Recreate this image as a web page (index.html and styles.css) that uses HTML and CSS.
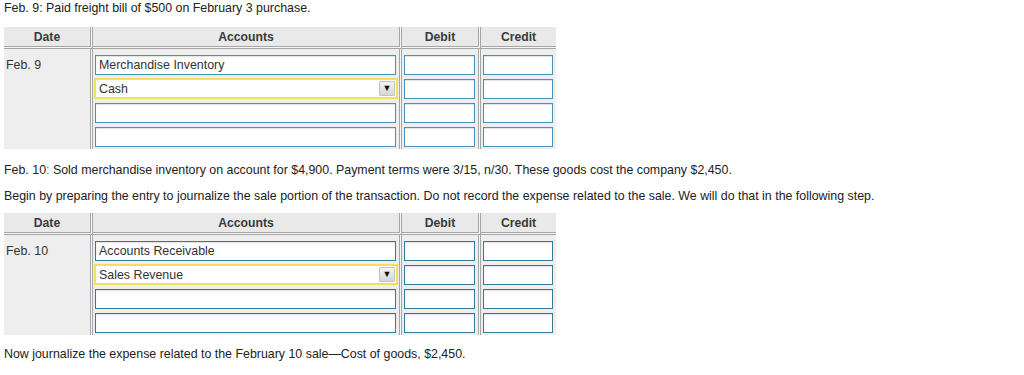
FILE: index.html
```html
<!DOCTYPE html>
<html>
<head>
<meta charset="utf-8">
<link rel="stylesheet" href="styles.css">
</head>
<body>
<p class="line first">Feb. 9: Paid freight bill of $500 on February 3 purchase.</p>
<table class="journal t1">
  <colgroup><col class="c-date"><col class="c-acct"><col class="c-deb"><col class="c-cred"></colgroup>
  <thead>
    <tr><th>Date</th><th>Accounts</th><th>Debit</th><th class="last">Credit</th></tr>
  </thead>
  <tbody>
    <tr class="r1">
      <td class="date" rowspan="4"><div class="datetext">Feb. 9</div></td>
      <td><div class="field">Merchandise Inventory</div></td>
      <td><div class="field"></div></td>
      <td class="last"><div class="field"></div></td>
    </tr>
    <tr>
      <td><div class="select"><span>Cash</span><span class="arrow">&#9660;</span></div></td>
      <td><div class="field"></div></td>
      <td class="last"><div class="field"></div></td>
    </tr>
    <tr>
      <td><div class="field"></div></td>
      <td><div class="field"></div></td>
      <td class="last"><div class="field"></div></td>
    </tr>
    <tr>
      <td><div class="field"></div></td>
      <td><div class="field"></div></td>
      <td class="last"><div class="field"></div></td>
    </tr>
  </tbody>
</table>
<p class="line after-table">Feb. 10<span class="green">:</span> Sold merchandise inventory on account for $4,900. Payment terms were 3/15, n/30. These goods cost the company $2,450.</p>
<p class="line gap">Begin by preparing the entry to journalize the sale portion of the transaction. Do not record the expense related to the sale. We will do that in the following step.</p>
<table class="journal t2">
  <colgroup><col class="c-date"><col class="c-acct"><col class="c-deb"><col class="c-cred"></colgroup>
  <thead>
    <tr><th>Date</th><th>Accounts</th><th>Debit</th><th class="last">Credit</th></tr>
  </thead>
  <tbody>
    <tr class="r1">
      <td class="date" rowspan="4"><div class="datetext">Feb. 10</div></td>
      <td><div class="field dark">Accounts Receivable</div></td>
      <td><div class="field dark"></div></td>
      <td class="last"><div class="field dark"></div></td>
    </tr>
    <tr>
      <td><div class="select"><span>Sales Revenue</span><span class="arrow">&#9660;</span></div></td>
      <td><div class="field dark"></div></td>
      <td class="last"><div class="field dark"></div></td>
    </tr>
    <tr>
      <td><div class="field dark"></div></td>
      <td><div class="field dark"></div></td>
      <td class="last"><div class="field dark"></div></td>
    </tr>
    <tr>
      <td><div class="field dark"></div></td>
      <td><div class="field dark"></div></td>
      <td class="last"><div class="field dark"></div></td>
    </tr>
  </tbody>
</table>
<p class="line last-line">Now journalize the expense related to the February 10 sale&mdash;Cost of goods, $2,450.</p>
</body>
</html>
```

FILE: styles.css
```css
html, body {
  margin: 0;
  background: #ffffff;
}
body {
  padding: 1px 4px 0 4px;
  font-family: "Liberation Sans", Arial, sans-serif;
  font-size: 12.4px;
  color: #222;
}
.line {
  margin: 0;
  line-height: 14px;
  white-space: nowrap;
}
.line.gap {
  margin-top: 12px;
}
.line.after-table {
  margin-top: 14px;
}
.line.last-line {
  margin-top: 12px;
}
.green { color: #3a9a3a; }

.journal {
  border-collapse: separate;
  border-spacing: 0;
  table-layout: fixed;
  width: 552px;
  background: #f7f7f7;
}
.journal.t1 { margin-top: 12px; }
.journal.t2 { margin-top: 10px; }
.c-date { width: 89px; }
.c-acct { width: 309px; }
.c-deb { width: 79px; }
.c-cred { width: 75px; }

.journal th {
  height: 19px;
  padding: 0;
  background: #e9e9e9;
  background-clip: padding-box;
  border-right: 3px double #a6a6a6;
  border-bottom: 3px double #a6a6a6;
  font-weight: bold;
  color: #3a3a3a;
  text-align: center;
  vertical-align: middle;
  font-size: 12.2px;
  line-height: 14px;
}
.journal td {
  padding: 2px 3px 2px 2px;
  background: #eeeeee;
  background-clip: padding-box;
  border-right: 3px double #a6a6a6;
  vertical-align: top;
}
.journal th.last, .journal td.last {
  border-right: none;
}
.journal tr.r1 td {
  padding-top: 6px;
}
.journal tr.r1 td.date {
  padding: 0 0 2px 2px;
}
.datetext {
  margin-top: 9px;
  line-height: 14px;
  color: #333;
}
.field {
  box-sizing: border-box;
  height: 20px;
  background: #ffffff;
  border: 1px solid #4693b5;
  box-shadow: inset 0 1px 1px rgba(0,0,0,0.12);
  padding: 0 3px;
  line-height: 18px;
  color: #333;
  font-size: 12.4px;
  white-space: nowrap;
  overflow: hidden;
}
.field.dark {
  border-color: #2f7d9d;
}
.select {
  box-sizing: border-box;
  height: 21px;
  margin: -1px -2px 0 -1px;
  background: #ffffff;
  border: 2px solid #f4df5a;
  padding: 0 1px 0 3px;
  display: flex;
  align-items: center;
  justify-content: space-between;
  color: #333;
  font-size: 12.4px;
}
.arrow {
  box-sizing: border-box;
  width: 16px;
  height: 15px;
  background: linear-gradient(#f4f4f4, #d6d6d6);
  border: 1px solid #c2c2c2;
  border-radius: 1px;
  font-size: 9px;
  line-height: 13px;
  text-align: center;
  color: #111;
}
```
